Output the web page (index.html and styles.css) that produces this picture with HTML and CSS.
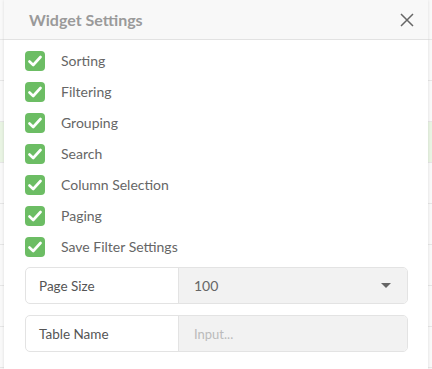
FILE: index.html
```html
<!DOCTYPE html>
<html lang="en">
<head>
    <meta charset="UTF-8">
    <title>Widget Settings</title>
    <link rel="stylesheet" href="styles.css">
</head>
<body>
    <div class="backdrop">
        <div class="bg-row"></div>
        <div class="bg-row"></div>
        <div class="bg-row"></div>
        <div class="bg-row bg-row-active"></div>
        <div class="bg-row"></div>
        <div class="bg-row"></div>
        <div class="bg-row"></div>
        <div class="bg-row"></div>
        <div class="bg-row"></div>
    </div>
    <div class="modal">
        <div class="modal-header">
            <h2 class="modal-title">Widget Settings</h2>
            <button class="modal-close" aria-label="Close">
                <svg width="14" height="14" viewBox="0 0 14 14">
                    <path d="M1 1L13 13M13 1L1 13" stroke="#666" stroke-width="1.5" fill="none"/>
                </svg>
            </button>
        </div>
        <div class="modal-body">
            <label class="check-row"><span class="check-box"><svg width="14" height="12" viewBox="0 0 14 12"><path d="M1.5 6.5L5.2 10L12.5 2" stroke="#fff" stroke-width="2.6" fill="none" stroke-linecap="round" stroke-linejoin="round"/></svg></span>Sorting</label>
            <label class="check-row"><span class="check-box"><svg width="14" height="12" viewBox="0 0 14 12"><path d="M1.5 6.5L5.2 10L12.5 2" stroke="#fff" stroke-width="2.6" fill="none" stroke-linecap="round" stroke-linejoin="round"/></svg></span>Filtering</label>
            <label class="check-row"><span class="check-box"><svg width="14" height="12" viewBox="0 0 14 12"><path d="M1.5 6.5L5.2 10L12.5 2" stroke="#fff" stroke-width="2.6" fill="none" stroke-linecap="round" stroke-linejoin="round"/></svg></span>Grouping</label>
            <label class="check-row"><span class="check-box"><svg width="14" height="12" viewBox="0 0 14 12"><path d="M1.5 6.5L5.2 10L12.5 2" stroke="#fff" stroke-width="2.6" fill="none" stroke-linecap="round" stroke-linejoin="round"/></svg></span>Search</label>
            <label class="check-row"><span class="check-box"><svg width="14" height="12" viewBox="0 0 14 12"><path d="M1.5 6.5L5.2 10L12.5 2" stroke="#fff" stroke-width="2.6" fill="none" stroke-linecap="round" stroke-linejoin="round"/></svg></span>Column Selection</label>
            <label class="check-row"><span class="check-box"><svg width="14" height="12" viewBox="0 0 14 12"><path d="M1.5 6.5L5.2 10L12.5 2" stroke="#fff" stroke-width="2.6" fill="none" stroke-linecap="round" stroke-linejoin="round"/></svg></span>Paging</label>
            <label class="check-row"><span class="check-box"><svg width="14" height="12" viewBox="0 0 14 12"><path d="M1.5 6.5L5.2 10L12.5 2" stroke="#fff" stroke-width="2.6" fill="none" stroke-linecap="round" stroke-linejoin="round"/></svg></span>Save Filter Settings</label>

            <div class="field-group field-first">
                <div class="field-label">Page Size</div>
                <div class="field-control">
                    <span>100</span>
                    <span class="caret"></span>
                </div>
            </div>
            <div class="field-group">
                <div class="field-label">Table Name</div>
                <div class="field-control">
                    <span class="placeholder">Input...</span>
                </div>
            </div>
        </div>
    </div>
</body>
</html>
```

FILE: styles.css
```css
* {
    box-sizing: border-box;
}
body {
    margin: 0;
    font-family: 'Lato', 'Liberation Sans', sans-serif;
    background: #f7f7f7;
    width: 432px;
    height: 369px;
    overflow: hidden;
    position: relative;
}
.backdrop {
    display: flex;
    flex-direction: column;
}
.bg-row {
    height: 41px;
    border-bottom: 1px solid #e6e6e6;
    background: #f9f9f9;
}
.bg-row:first-child {
    height: 40px;
}
.bg-row-active {
    background: #e9f4e3;
}
.modal {
    position: absolute;
    top: 0;
    left: 4px;
    width: 424px;
    height: 369px;
    background: #fff;
    box-shadow: 0 0 3px rgba(0, 0, 0, 0.12);
}
.modal-header {
    height: 40px;
    background: #f8f8f8;
    border-bottom: 1px solid #e2e2e2;
    display: flex;
    align-items: center;
    justify-content: space-between;
    padding: 0 14px 0 25px;
}
.modal-title {
    margin: 0;
    font-size: 16px;
    font-weight: 700;
    color: #9a9a9a;
}
.modal-close {
    border: none;
    background: none;
    padding: 0;
    width: 14px;
    height: 14px;
    display: flex;
    cursor: pointer;
}
.modal-body {
    padding: 5px 20px 0 21px;
}
.check-row {
    display: flex;
    align-items: center;
    gap: 16px;
    height: 31px;
    font-size: 14px;
    color: #666;
}
.check-box {
    width: 20px;
    height: 20px;
    border-radius: 4px;
    background: #6cbd64;
    display: flex;
    align-items: center;
    justify-content: center;
}
.field-group {
    display: flex;
    height: 37px;
    border: 1px solid #e3e3e3;
    border-radius: 5px;
    overflow: hidden;
    margin-top: 11px;
    font-size: 14px;
}
.field-first {
    margin-top: 5px;
}
.field-label {
    width: 153px;
    display: flex;
    align-items: center;
    padding-left: 13px;
    color: #555;
    border-right: 1px solid #e3e3e3;
    font-size: 13.5px;
}
.field-control {
    flex: 1;
    background: #f2f2f2;
    display: flex;
    align-items: center;
    justify-content: space-between;
    padding: 0 16px 0 15px;
    color: #666;
}
.placeholder {
    color: #bbb;
    font-size: 13px;
}
.caret {
    width: 0;
    height: 0;
    border-left: 5px solid transparent;
    border-right: 5px solid transparent;
    border-top: 5px solid #666;
}
```
